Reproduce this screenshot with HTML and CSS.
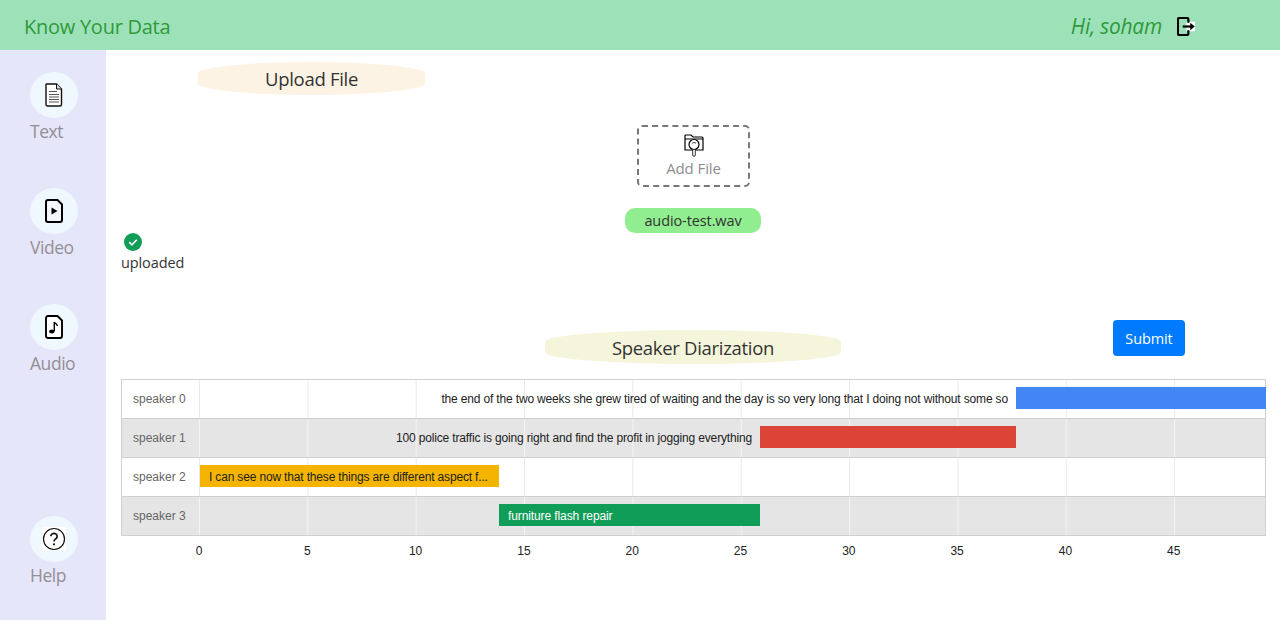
FILE: index.html
```html
<!DOCTYPE html>
<html lang="en">
<head>
<meta charset="utf-8">
<title>Know Your Data</title>
<link rel="stylesheet" href="styles.css">
</head>
<body>
<header class="topbar">
  <span class="brand">Know Your Data</span>
  <div class="user">
    <span class="greeting">Hi, soham</span>
    <svg class="logout" viewBox="0 0 19 20" aria-hidden="true">
      <rect x="10" y="5" width="9" height="10" fill="#fff"/>
      <path d="M12 6V2.500A1.500 1.500 0 0 0 10.500 1H2.500A1.500 1.500 0 0 0 1 2.500v15A1.500 1.500 0 0 0 2.500 19h8a1.500 1.500 0 0 0 1.500-1.500V14" fill="none" stroke="#000" stroke-width="2.300"/>
      <path d="M6 10h10" stroke="#000" stroke-width="2.300"/>
      <path d="M14 6 18.800 10 14 14z" fill="#000"/>
    </svg>
  </div>
</header>
<div class="layout">
  <nav class="sidebar">
    <a class="nav-item">
      <span class="nav-circle">
        <svg class="nav-icon" viewBox="0 0 18 24" aria-hidden="true">
          <path d="M1.500 1h10l5 5v15.500a1.500 1.500 0 0 1-1.500 1.500H2.500A1.500 1.500 0 0 1 1 21.500V1.500z" fill="#fff" stroke="#111" stroke-width="1.400"/>
          <path d="M11.500 1v5h5" fill="#ddd" stroke="#111" stroke-width="1"/>
          <path d="M4 8.500h8M4 11.500h10M4 14h10M4 16.500h10M4 19h10" stroke="#555" stroke-width="1.200"/>
        </svg>
      </span>
      <span class="nav-label">Text</span>
    </a>
    <a class="nav-item">
      <span class="nav-circle">
        <svg class="nav-icon" viewBox="0 0 18 24" aria-hidden="true">
          <path d="M3 1h9.500L17 5.500V21a2 2 0 0 1-2 2H3a2 2 0 0 1-2-2V3a2 2 0 0 1 2-2z" fill="#f4f4fc" stroke="#000" stroke-width="2"/>
          <path d="M6.500 8.500 12.500 12l-6 3.500z" fill="#000"/>
        </svg>
      </span>
      <span class="nav-label">Video</span>
    </a>
    <a class="nav-item">
      <span class="nav-circle">
        <svg class="nav-icon" viewBox="0 0 18 24" aria-hidden="true">
          <path d="M3 1h9.500L17 5.500V21a2 2 0 0 1-2 2H3a2 2 0 0 1-2-2V3a2 2 0 0 1 2-2z" fill="#fff" stroke="#000" stroke-width="1.900"/>
          <path d="M9.300 7v9" stroke="#000" stroke-width="1.400"/>
          <path d="M9.300 7c1 2 3 2 3 4" fill="none" stroke="#000" stroke-width="1.400"/>
          <ellipse cx="6.800" cy="16.500" rx="2.700" ry="2" fill="#000"/>
        </svg>
      </span>
      <span class="nav-label">Audio</span>
    </a>
    <a class="nav-item nav-help">
      <span class="nav-circle">
        <svg class="help-icon" viewBox="0 0 24 24" aria-hidden="true">
          <rect width="24" height="24" fill="#fff"/>
          <circle cx="12" cy="12" r="10.500" fill="none" stroke="#111" stroke-width="1.200"/>
          <path d="M8.800 9.300a3.200 3 0 1 1 4.800 2.600c-1 .7-1.600 1.200-1.600 2.500" fill="none" stroke="#111" stroke-width="1.700"/>
          <circle cx="12" cy="17.300" r="1.100" fill="#111"/>
        </svg>
      </span>
      <span class="nav-label">Help</span>
    </a>
  </nav>
  <main class="content">
    <h2 class="pill-title upload-title">Upload File</h2>
    <div class="dropzone">
      <svg class="add-icon" viewBox="0 0 20 24" aria-hidden="true">
        <path d="M1 17V3a1 1 0 0 1 1-1h5l2 2h9a1 1 0 0 1 1 1v12z" fill="#fff" stroke="#000" stroke-width="1.200"/>
        <path d="M1 6h18" stroke="#000" stroke-width="1"/>
        <circle cx="10" cy="11.500" r="5" fill="#fff" stroke="#000" stroke-width="1.200"/>
        <path d="M8 10.500a2.500 2.500 0 0 1 4 0" fill="none" stroke="#444" stroke-width="1"/>
        <path d="M8.700 16.500h2.600V22a1.300 1.300 0 0 1-2.600 0z" fill="#fff" stroke="#333" stroke-width="1"/>
      </svg>
      <span class="add-label">Add File</span>
    </div>
    <div class="file-pill">audio-test.wav</div>
    <div class="status">
      <svg class="status-icon" viewBox="0 0 18 18" aria-hidden="true">
        <circle cx="9" cy="9" r="9" fill="#0f9d58"/>
        <path d="M5.200 9.200 7.900 11.800 12.800 6.800" fill="none" stroke="#fff" stroke-width="1.600"/>
      </svg>
      <span class="status-text">uploaded</span>
    </div>
    <div class="result-head">
      <h2 class="pill-title diar-title">Speaker Diarization</h2>
      <button class="submit" type="button">Submit</button>
    </div>
    <section class="chart">
      <div class="row">
        <div class="row-label">speaker 0</div>
        <div class="track"><div class="bar" style="left:76.64%;width:23.45%;background:#4285f4"><span class="bar-text outside">the end of the two weeks she grew tired of waiting and the day is so very long that I doing not without some so</span></div></div>
      </div>
      <div class="row alt">
        <div class="row-label">speaker 1</div>
        <div class="track"><div class="bar" style="left:52.63%;width:24.02%;background:#db4437"><span class="bar-text outside">100 police traffic is going right and find the profit in jogging everything</span></div></div>
      </div>
      <div class="row">
        <div class="row-label">speaker 2</div>
        <div class="track"><div class="bar" style="left:.09%;width:28.05%;background:#f4b400"><span class="bar-text inside">I can see now that these things are different aspect f...</span></div></div>
      </div>
      <div class="row alt">
        <div class="row-label">speaker 3</div>
        <div class="track"><div class="bar" style="left:28.14%;width:24.48%;background:#0f9d58"><span class="bar-text inside light">furniture flash repair</span></div></div>
      </div>
      <div class="axis">
        <div class="ticks">
          <span class="tick" style="left:0">0</span>
          <span class="tick" style="left:10.16%">5</span>
          <span class="tick" style="left:20.32%">10</span>
          <span class="tick" style="left:30.48%">15</span>
          <span class="tick" style="left:40.64%">20</span>
          <span class="tick" style="left:50.8%">25</span>
          <span class="tick" style="left:60.96%">30</span>
          <span class="tick" style="left:71.12%">35</span>
          <span class="tick" style="left:81.28%">40</span>
          <span class="tick" style="left:91.44%">45</span>
        </div>
      </div>
    </section>
  </main>
</div>
</body>
</html>
```
FILE: styles.css
```css
* { box-sizing: border-box; }
html, body { margin: 0; height: 620px; overflow: hidden; background: #fff; }
body { font-family: "Open Sans", "Noto Sans", sans-serif; color: #333; display: flex; flex-direction: column; }

.topbar { height: 50px; flex: none; background: #9de1b9; display: flex; align-items: center; justify-content: space-between; padding: 0 85px 0 24px; }
.brand { font-size: 20px; line-height: 27px; padding-top: 2px; color: #2f9a3a; letter-spacing: -.26px; }
.user { display: flex; align-items: center; gap: 15px; }
.greeting { font-size: 21px; line-height: 27px; padding-top: 2px; font-style: italic; color: #2f9a3a; letter-spacing: -.25px; }
.logout { width: 18px; height: 19px; display: block; margin-top: 3px; }

.layout { flex: 1; display: flex; min-height: 0; }
.sidebar { width: 106px; flex: none; background: #e6e6fa; display: flex; flex-direction: column; gap: 43px; padding: 22px 0 31px 30px; }
.nav-item { display: flex; flex-direction: column; align-items: flex-start; }
.nav-help { margin-top: auto; }
.nav-circle { width: 48px; height: 46px; border-radius: 50%; background: #f0f8ff; display: flex; align-items: center; justify-content: center; }
.nav-icon { width: 18px; height: 24px; display: block; margin-right: 1px; }
.help-icon { width: 24px; height: 24px; display: block; }
.nav-label { font-size: 17.500px; line-height: 27px; color: #948f96; letter-spacing: -.45px; }

.content { flex: 1; min-width: 0; display: flex; flex-direction: column; padding: 12px 14px 0 15px; }
.pill-title { margin: 0; font-size: 18.500px; font-weight: 400; color: #333; letter-spacing: -.3px; border-radius: 50% / 35%; display: flex; align-items: center; justify-content: center; }
.upload-title { width: 227px; height: 33px; margin-left: 77px; background: #fdf3e4; }
.dropzone { width: 113px; height: 62px; align-self: center; margin-top: 30px; border: 2px dashed #777; border-radius: 5px; display: flex; flex-direction: column; align-items: center; padding-top: 6px; }
.add-icon { width: 20px; height: 24px; display: block; }
.add-label { font-size: 15px; line-height: 20px; margin-top: 1px; color: #8e8e92; letter-spacing: -.1px; }
.file-pill { width: 136px; height: 25px; align-self: center; margin: 21px 2px 0 0; padding-left: 1px; background: #90ee90; border-radius: 10px; font-size: 14.500px; letter-spacing: -.1px; color: #333; display: flex; align-items: center; justify-content: center; }
.status { display: flex; flex-direction: column; align-items: flex-start; }
.status-icon { width: 18px; height: 18px; display: block; margin-left: 3px; }
.status-text { font-size: 14.500px; line-height: 24px; letter-spacing: -.1px; color: #333; }

.result-head { display: grid; grid-template-columns: 424px 296px 1fr; margin-top: 45px; }
.diar-title { grid-column: 2; width: 296px; height: 34px; margin-top: 10px; background: #f5f5dc; }
.submit { grid-column: 3; justify-self: end; align-self: start; width: 72px; height: 36px; margin-right: 81px; border: 0; border-radius: 4px; background: #007bff; color: #fff; font: 400 14.500px "Open Sans", sans-serif; letter-spacing: -.1px; }

.chart { margin-top: 15px; font-family: "Liberation Sans", Arial, sans-serif; font-size: 12px; }
.row { height: 40px; display: flex; background: #fff; border: 1px solid #d0d0d0; margin-bottom: -1px; --grid: #e9e9e9; }
.row.alt { background: #e5e5e5; --grid: #f4f4f4; }
.row-label { width: 77px; flex: none; padding-left: 11px; color: #666; line-height: 38px; }
.track { flex: 1; position: relative; background-image: linear-gradient(to right, var(--grid) 1px, transparent 1px); background-size: 108.35px 100%; }
.bar { position: absolute; top: 7px; height: 22px; padding-top: 1px; display: flex; align-items: center; }
.bar-text { white-space: nowrap; color: #222; letter-spacing: -.16px; }
.outside { position: absolute; right: calc(100% + 8px); }
.inside { padding-left: 9px; }
.light { color: #fff; letter-spacing: -.1px; }
.axis { padding-left: 78px; padding-right: 1px; margin-top: 1px; }
.ticks { position: relative; height: 30px; }
.tick { position: absolute; top: 8px; transform: translateX(-50%); color: #222; line-height: 14px; }
```
